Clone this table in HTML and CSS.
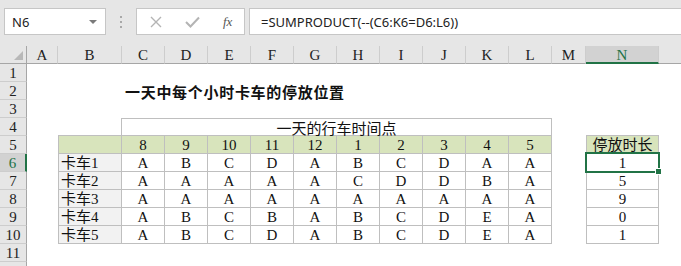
FILE: index.html
```html
<!DOCTYPE html>
<html lang="zh-CN">
<head>
    <meta charset="UTF-8">
    <title>一天中每个小时卡车的停放位置</title>
    <link rel="stylesheet" href="styles.css">
</head>
<body>

    <!-- barra de fórmulas -->
    <div class="toolbar">
        <div class="namebox"><span>N6</span><span class="caret"></span></div>
        <div class="grip">
            <svg width="4" height="14" viewBox="0 0 4 14"><rect x="1" y="1" width="2" height="2" fill="#a8a8a8"/><rect x="1" y="6" width="2" height="2" fill="#a8a8a8"/><rect x="1" y="11" width="2" height="2" fill="#a8a8a8"/></svg>
        </div>
        <div class="fnbox">
            <svg class="ico-x" width="12" height="12" viewBox="0 0 12 12"><path d="M1 1 L11 11 M11 1 L1 11" stroke="#b4b4b4" stroke-width="1.4" fill="none"/></svg>
            <svg class="ico-ok" width="15" height="12" viewBox="0 0 15 12"><path d="M1 6 L5.5 10.5 L14 1.5" stroke="#b4b4b4" stroke-width="2" fill="none"/></svg>
            <span class="fx">fx</span>
        </div>
        <div class="formula">=SUMPRODUCT(--(C6:K6=D6:L6))</div>
    </div>

    <div class="sheet">
        <div class="row head">
            <div class="corner"><span class="tri"></span></div>
            <div class="col">A</div>
            <div class="col">B</div>
            <div class="col">C</div>
            <div class="col">D</div>
            <div class="col">E</div>
            <div class="col">F</div>
            <div class="col">G</div>
            <div class="col">H</div>
            <div class="col">I</div>
            <div class="col">J</div>
            <div class="col">K</div>
            <div class="col">L</div>
            <div class="col">M</div>
            <div class="col sel">N</div>
            <div class="col last"></div>
        </div>

        <div class="row"><div class="rh">1</div></div>
        <div class="row">
            <div class="rh">2</div>
            <div class="title">一天中每个小时卡车的停放位置</div>
        </div>
        <div class="row"><div class="rh">3</div></div>
        <div class="row">
            <div class="rh">4</div>
            <div class="edge-b"></div>
            <div class="merged">一天的行车时间点</div>
            <div class="under-n"></div>
        </div>

        <div class="row">
            <div class="rh">5</div>
            <div class="c g name"></div>
            <div class="c g">8</div>
            <div class="c g">9</div>
            <div class="c g">10</div>
            <div class="c g">11</div>
            <div class="c g">12</div>
            <div class="c g">1</div>
            <div class="c g">2</div>
            <div class="c g">3</div>
            <div class="c g">4</div>
            <div class="c g">5</div>
            <div class="c g n">停放时长</div>
        </div>

        <div class="row">
            <div class="rh sel">6</div>
            <div class="c name">卡车1</div>
            <div class="c">A</div><div class="c">B</div><div class="c">C</div><div class="c">D</div><div class="c">A</div>
            <div class="c">B</div><div class="c">C</div><div class="c">D</div><div class="c">A</div><div class="c">A</div>
            <div class="c n active">1<span class="cursor"><span class="handle"></span></span></div>
        </div>
        <div class="row">
            <div class="rh">7</div>
            <div class="c name">卡车2</div>
            <div class="c">A</div><div class="c">A</div><div class="c">A</div><div class="c">A</div><div class="c">A</div>
            <div class="c">C</div><div class="c">D</div><div class="c">D</div><div class="c">B</div><div class="c">A</div>
            <div class="c n">5</div>
        </div>
        <div class="row">
            <div class="rh">8</div>
            <div class="c name">卡车3</div>
            <div class="c">A</div><div class="c">A</div><div class="c">A</div><div class="c">A</div><div class="c">A</div>
            <div class="c">A</div><div class="c">A</div><div class="c">A</div><div class="c">A</div><div class="c">A</div>
            <div class="c n">9</div>
        </div>
        <div class="row">
            <div class="rh">9</div>
            <div class="c name">卡车4</div>
            <div class="c">A</div><div class="c">B</div><div class="c">C</div><div class="c">B</div><div class="c">A</div>
            <div class="c">B</div><div class="c">C</div><div class="c">D</div><div class="c">E</div><div class="c">A</div>
            <div class="c n">0</div>
        </div>
        <div class="row">
            <div class="rh">10</div>
            <div class="c name">卡车5</div>
            <div class="c">A</div><div class="c">B</div><div class="c">C</div><div class="c">D</div><div class="c">A</div>
            <div class="c">B</div><div class="c">C</div><div class="c">D</div><div class="c">E</div><div class="c">A</div>
            <div class="c n">1</div>
        </div>

        <div class="row"><div class="rh">11</div></div>
        <div class="row"><div class="rh"></div></div>
    </div>

</body>
</html>
```

FILE: styles.css
```css
body {
    margin: 0;
    width: 681px;
    height: 266px;
    overflow: hidden;
    background-color: white;
    font-family: "Liberation Serif", "Noto Sans CJK SC", serif;
    font-size: 15px;
    color: #111;
}

/* barra de fórmulas */
.toolbar {
    height: 46px;
    box-sizing: border-box;
    padding-top: 8px;
    background-color: #e6e6e6;
    display: flex;
    align-items: flex-start;
}
.namebox, .fnbox, .formula {
    height: 27px;
    box-sizing: border-box;
    border: 1px solid #c6c6c6;
    background-color: white;
    display: flex;
    align-items: center;
}
.namebox {
    margin-left: 4px;
    width: 102px;
    padding: 0 8px 0 7px;
    justify-content: space-between;
    font: 13px "Noto Sans", sans-serif;
    color: #222;
}
.caret {
    width: 0;
    height: 0;
    border-left: 4px solid transparent;
    border-right: 4px solid transparent;
    border-top: 4px solid #7a7a7a;
}
.grip {
    width: 30px;
    height: 27px;
    display: flex;
    align-items: center;
    justify-content: center;
}
.fnbox {
    width: 109px;
}
.ico-x {
    margin-left: 13px;
}
.ico-ok {
    margin-left: 23px;
}
.fx {
    margin-left: 23px;
    font: italic 13px "Liberation Serif", serif;
    color: #555;
}
.formula {
    flex: 1;
    margin-left: 4px;
    border-right: none;
    padding-left: 11px;
    font: 13px "Noto Sans", sans-serif;
    color: #222;
}

/* planilha */
.row {
    display: grid;
    grid-template-columns: 27px 31px 64px repeat(10, 43px) 34px 73px 1fr;
    height: 18px;
}
.row > div {
    box-sizing: border-box;
    height: 18px;
    white-space: nowrap;
}
.head > div {
    background-color: #e6e6e6;
    border-bottom: 1px solid #a6a6a6;
}
.corner {
    border-right: 1px solid #a6a6a6;
    display: flex;
    align-items: flex-end;
    justify-content: flex-end;
    padding: 0 3px 3px 0;
}
.tri {
    width: 0;
    height: 0;
    border-left: 9px solid transparent;
    border-bottom: 9px solid #b8b8b8;
}
.col {
    border-right: 1px solid #cdcdcd;
    text-align: center;
    font-size: 15px;
    line-height: 18px;
    color: #222;
}
.col.sel {
    background-color: #d2d2d2;
    color: #217346;
    border-bottom: 2px solid #217346;
}
.col.last {
    border-right: none;
}
.rh {
    background-color: #e6e6e6;
    border-right: 1px solid #a6a6a6;
    border-bottom: 1px solid #cdcdcd;
    text-align: center;
    font-size: 15px;
    line-height: 18px;
    color: #222;
}
.rh.sel {
    background-color: #d2d2d2;
    color: #217346;
    border-right: 2px solid #217346;
}

.title {
    grid-column: 4 / span 8;
    padding: 2px 0 0 3px;
    line-height: 15px;
    font-family: "Noto Sans CJK SC", sans-serif;
    font-weight: bold;
    letter-spacing: 0.7px;
}
.edge-b {
    grid-column: 3;
    border-right: 1px solid #bfbfbf;
    border-bottom: 1px solid #bfbfbf;
}
.merged {
    grid-column: 4 / span 10;
    border-top: 1px solid #bfbfbf;
    border-right: 1px solid #bfbfbf;
    border-bottom: 1px solid #bfbfbf;
    text-align: center;
    line-height: 15px;
    padding-top: 1px;
    font-family: "Noto Sans CJK SC", sans-serif;
}
.under-n {
    grid-column: 15;
    border-bottom: 1px solid #bfbfbf;
}

.c {
    border-right: 1px solid #bfbfbf;
    border-bottom: 1px solid #bfbfbf;
    text-align: center;
    padding-top: 2px;
    line-height: 15px;
}
.c.name {
    grid-column: 3;
    border-left: 1px solid #bfbfbf;
    background-color: #f2f2f2;
    text-align: left;
    padding-left: 2px;
}
.c.g {
    background-color: #d8e4bc;
}
.c.n {
    grid-column: 15;
    border-left: 1px solid #bfbfbf;
}

/* célula ativa */
.active {
    position: relative;
}
.cursor {
    position: absolute;
    top: -2px;
    left: -2px;
    right: -2px;
    bottom: -2px;
    border: 2px solid #217346;
}
.handle {
    position: absolute;
    right: -4px;
    bottom: -4px;
    width: 5px;
    height: 5px;
    background-color: #217346;
    border: 1px solid white;
}
```
